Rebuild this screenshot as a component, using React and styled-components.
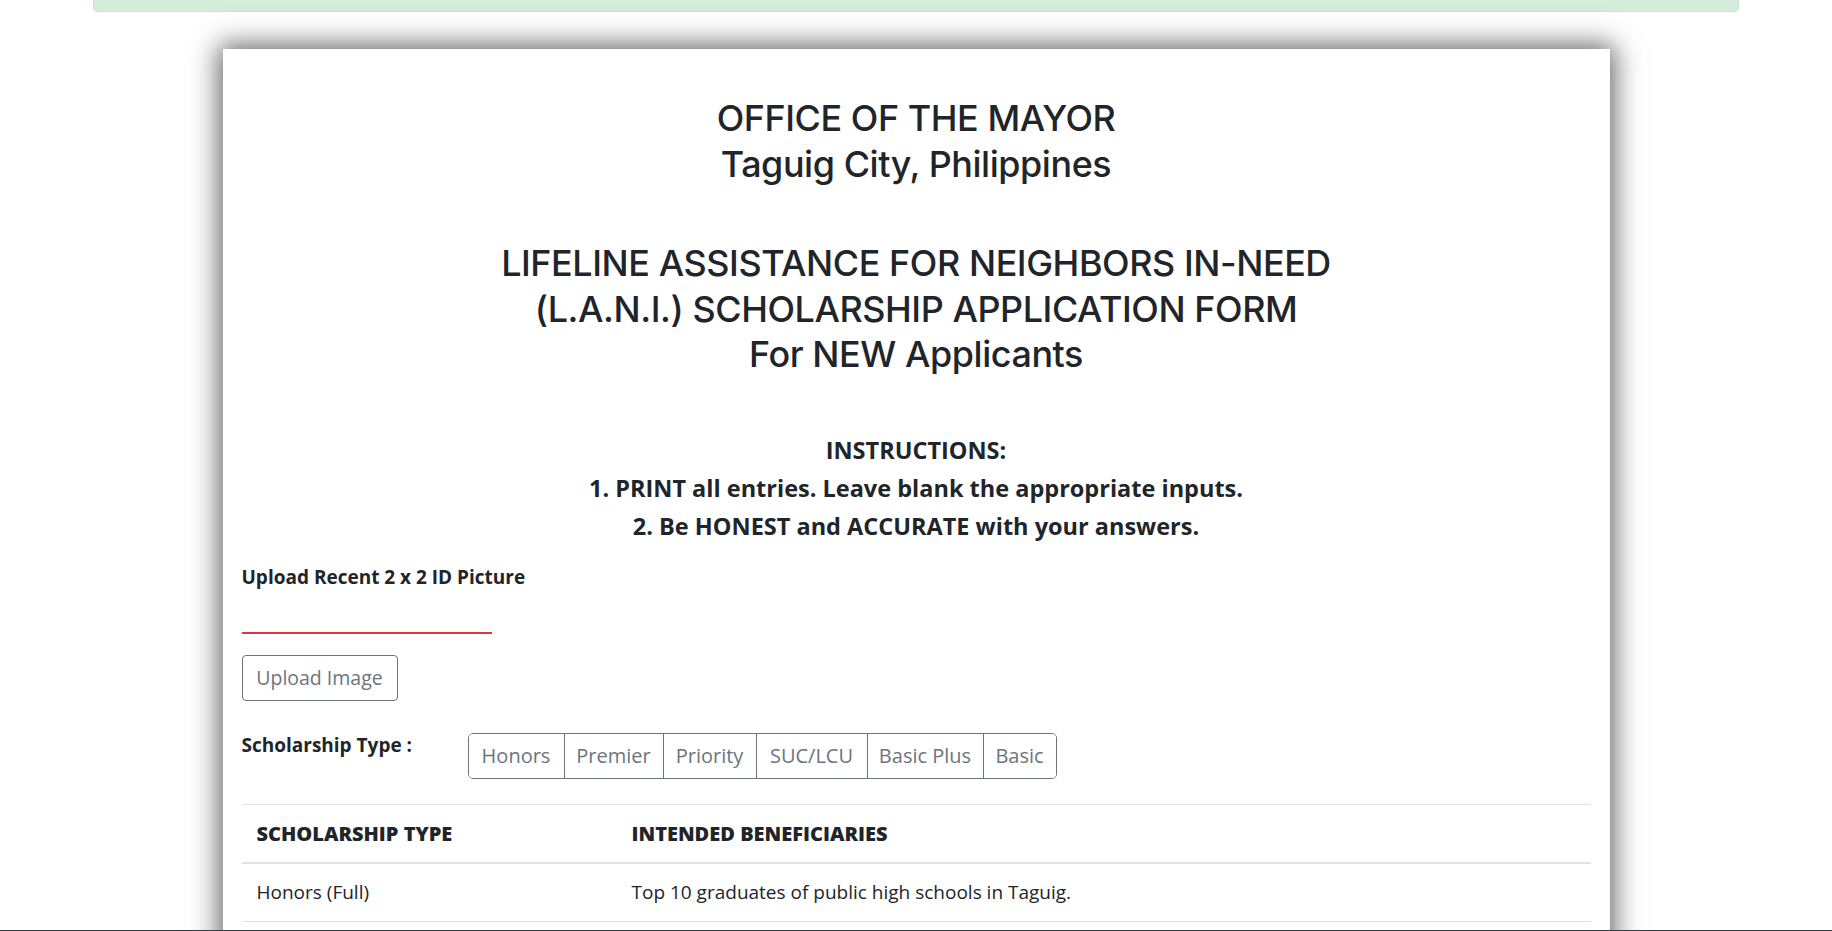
import React from 'react';
import styled, { createGlobalStyle } from 'styled-components';

const GlobalStyle = createGlobalStyle`
  html, body {
    margin: 0;
    padding: 0;
    background: #fff;
  }
  body {
    font-family: "Open Sans", "Noto Sans", sans-serif;
    color: #212529;
    overflow: hidden;
  }
  * {
    box-sizing: border-box;
  }
`;

const Page = styled.div`
  width: 100%;
  min-height: 931px;
`;

const AlertStrip = styled.div`
  margin: 0 93px;
  height: 12px;
  background: #d4edda;
  border: 1px solid #c3e6cb;
  border-top: none;
  border-radius: 0 0 5px 5px;
`;

const Card = styled.div`
  width: 1387px;
  margin: 37px auto 0;
  padding: 47px 19px 40px;
  background: #fff;
  box-shadow: 0 0 26px 4px rgba(0, 0, 0, 0.62);
`;

const Heading = styled.h2`
  margin: 0 0 ${props => props.gap || 0}px;
  text-align: center;
  font-family: Inter, "Open Sans", sans-serif;
  font-weight: 450;
  font-size: 35.9px;
  letter-spacing: -0.42px;
  line-height: 45.5px;
  color: #212529;
`;

const Instructions = styled.div`
  text-align: center;
  font-weight: 700;
  font-size: 23.5px;
  line-height: 38px;
  margin-bottom: 19px;
`;

const Label = styled.div`
  font-weight: 700;
  font-size: 19px;
  line-height: 27px;
`;

const PhotoSlot = styled.div`
  width: 250px;
  height: 43px;
  border-bottom: 2px solid #dc3545;
  margin-bottom: 21px;
`;

const OutlineButton = styled.button`
  font-family: inherit;
  font-size: 19.5px;
  color: #6c757d;
  background: #fff;
  border: 1px solid #6c757d;
  border-radius: 4px;
  height: 46px;
  width: 156px;
  padding: 0;
  cursor: pointer;
`;

const TypeRow = styled.div`
  display: grid;
  grid-template-columns: 226px auto;
  align-items: start;
  margin-top: 31px;
`;

const ButtonGroup = styled.div`
  display: inline-flex;
  justify-self: start;
  margin-top: 1px;
  border: 1px solid #6c757d;
  border-radius: 5px;
  overflow: hidden;
`;

const GroupButton = styled.button`
  font-family: inherit;
  font-size: 20px;
  color: #6c757d;
  background: #fff;
  border: none;
  border-left: ${props => (props.first ? 'none' : '1px solid #6c757d')};
  height: 44px;
  width: ${props => props.w}px;
  padding: 0;
  cursor: pointer;
`;

const Table = styled.table`
  width: 100%;
  margin-top: 25px;
  border-collapse: collapse;
  font-size: 19px;
`;

const HeadCell = styled.th`
  text-align: left;
  font-weight: 800;
  font-size: 20px;
  text-transform: uppercase;
  padding: 15px;
  line-height: 27px;
  border-top: 1px solid #dee2e6;
  border-bottom: 2px solid #dee2e6;
  width: ${props => props.w || 'auto'};
`;

const Cell = styled.td`
  padding: 15px;
  line-height: 27px;
  border-bottom: 1px solid #dee2e6;
`;

const BottomBar = styled.div`
  position: fixed;
  left: 0;
  right: 0;
  bottom: 0;
  height: 1px;
  background: #343a40;
`;

const types = [
  { name: 'Honors', w: 95 },
  { name: 'Premier', w: 99 },
  { name: 'Priority', w: 93 },
  { name: 'SUC/LCU', w: 111 },
  { name: 'Basic Plus', w: 116 },
  { name: 'Basic', w: 73 }
];

export default function App() {
  return (
    <Page>
      <GlobalStyle />
      <AlertStrip />
      <Card>
        <Heading gap={54}>
          OFFICE OF THE MAYOR
          <br />
          Taguig City, Philippines
        </Heading>
        <Heading gap={53}>
          LIFELINE ASSISTANCE FOR NEIGHBORS IN-NEED
          <br />
          (L.A.N.I.) SCHOLARSHIP APPLICATION FORM
          <br />
          For NEW Applicants
        </Heading>
        <Instructions>
          INSTRUCTIONS:
          <br />
          1. PRINT all entries. Leave blank the appropriate inputs.
          <br />
          2. Be HONEST and ACCURATE with your answers.
        </Instructions>
        <Label>Upload Recent 2 x 2 ID Picture</Label>
        <PhotoSlot />
        <OutlineButton>Upload Image</OutlineButton>
        <TypeRow>
          <Label>Scholarship Type :</Label>
          <ButtonGroup>
            {types.map((t, i) => (
              <GroupButton key={t.name} first={i === 0} w={t.w}>
                {t.name}
              </GroupButton>
            ))}
          </ButtonGroup>
        </TypeRow>
        <Table>
          <thead>
            <tr>
              <HeadCell w="375px">Scholarship Type</HeadCell>
              <HeadCell>Intended Beneficiaries</HeadCell>
            </tr>
          </thead>
          <tbody>
            <tr>
              <Cell>Honors (Full)</Cell>
              <Cell>Top 10 graduates of public high schools in Taguig.</Cell>
            </tr>
          </tbody>
        </Table>
      </Card>
      <BottomBar />
    </Page>
  );
}
